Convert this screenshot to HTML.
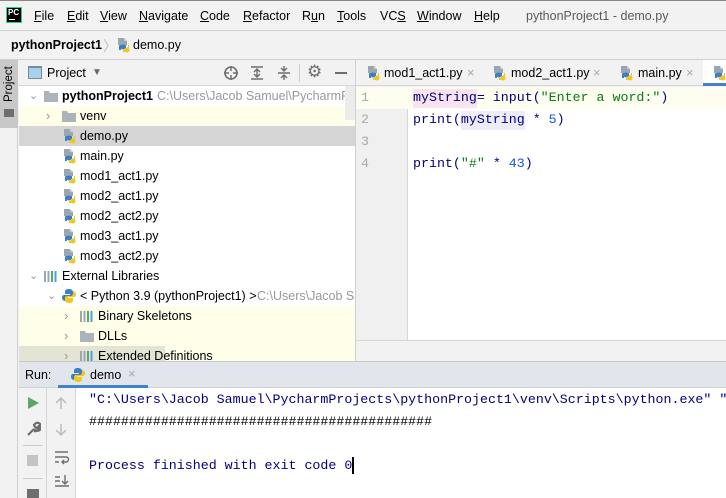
<!DOCTYPE html>
<html><head><meta charset="utf-8"><style>
*{margin:0;padding:0;box-sizing:border-box}
body{width:726px;height:498px;overflow:hidden;background:#f2f2f2;font-family:"Liberation Sans",sans-serif;font-size:12.5px;color:#000;position:relative}
.a{position:absolute;white-space:nowrap}
.mono{font-family:"Liberation Mono",monospace;font-size:13.3px}
.row{position:absolute;left:19px;width:336px;height:20px;line-height:20px}
u{text-decoration:underline}
.chv{color:#999;font-size:11px}
</style></head><body>
<svg width="0" height="0" style="position:absolute"><defs>
<symbol id="py" viewBox="0 0 16 16"><path d="M2 1h6l3 3v4H2z" fill="#9aa7b0"/><path d="M8 1v3h3" fill="#c6ccd1"/><path d="M6 8h4v3H5v2H3V9a1 1 0 0 1 1-1z" fill="#3d7fc4"/><path d="M12 8v4a1 1 0 0 1-1 1H7v2h4a2 2 0 0 0 2-2V8z" fill="#f5c518"/><circle cx="11" cy="13" r="2.5" fill="#f5c518"/><circle cx="7" cy="10" r="2.5" fill="#3d7fc4"/></symbol>
<symbol id="pyl" viewBox="0 0 16 16"><path d="M8 1C5 1 4 2 4 4v2h5v1H3C1 7 1 9 1 10s1 3 3 3V10c0-1 1-2 2-2h4c1 0 2-1 2-2V4c0-2-2-3-4-3z" fill="#3d7fc4"/><path d="M8 15c3 0 4-1 4-3v-2H7V9h6c2 0 2-2 2-3s-1-3-3-3v3c0 1-1 2-2 2H6c-1 0-2 1-2 2v2c0 2 2 3 4 3z" fill="#f5c518"/></symbol>
<symbol id="fold" viewBox="0 0 16 16"><path d="M1 3h5l1 2h8v9H1z" fill="#aab4ba"/></symbol>
<symbol id="lib" viewBox="0 0 16 16"><rect x="1" y="3" width="2" height="11" fill="#9aa7b0"/><rect x="4.5" y="3" width="2" height="11" fill="#9aa7b0"/><rect x="8" y="3" width="2" height="11" fill="#59a869"/><rect x="11.5" y="3" width="2" height="11" fill="#40a6e0"/></symbol>
</defs></svg>

<div class="a" style="left:0;top:0;width:726px;height:1px;background:#888"></div>
<div class="a" style="left:6px;top:7px;width:16px;height:16px;background:#000;border:1px solid #21d789"><span style="position:absolute;left:1px;top:1px;color:#fff;font-size:8px;font-weight:bold;line-height:8px">PC</span><span style="position:absolute;left:2px;bottom:2px;width:6px;height:1px;background:#fff"></span></div>
<div class="a" style="left:34px;top:9px;line-height:14px"><u>F</u>ile</div>
<div class="a" style="left:67px;top:9px;line-height:14px"><u>E</u>dit</div>
<div class="a" style="left:100px;top:9px;line-height:14px"><u>V</u>iew</div>
<div class="a" style="left:139px;top:9px;line-height:14px"><u>N</u>avigate</div>
<div class="a" style="left:200px;top:9px;line-height:14px"><u>C</u>ode</div>
<div class="a" style="left:243px;top:9px;line-height:14px"><u>R</u>efactor</div>
<div class="a" style="left:302px;top:9px;line-height:14px">R<u>u</u>n</div>
<div class="a" style="left:337px;top:9px;line-height:14px"><u>T</u>ools</div>
<div class="a" style="left:380px;top:9px;line-height:14px">VC<u>S</u></div>
<div class="a" style="left:417px;top:9px;line-height:14px"><u>W</u>indow</div>
<div class="a" style="left:474px;top:9px;line-height:14px"><u>H</u>elp</div>
<div class="a" style="left:526px;top:9px;line-height:14px;color:#5a5a5a">pythonProject1 - demo.py</div>
<div class="a" style="left:0;top:30px;width:726px;height:1px;background:#d0d0d0"></div>
<div class="a" style="left:11px;top:38px;line-height:14px;font-weight:bold">pythonProject1</div>
<div class="a" style="left:103px;top:36px;color:#bbb;font-size:14px">〉</div>
<svg class="a" style="left:116px;top:37px" width="16" height="16"><use href="#py"/></svg>
<div class="a" style="left:133px;top:38px;line-height:14px">demo.py</div>
<div class="a" style="left:0;top:59px;width:726px;height:1px;background:#d0d0d0"></div>

<div class="a" style="left:0;top:60px;width:18px;height:438px;background:#f2f2f2;border-right:1px solid #d0d0d0"></div>
<div class="a" style="left:0;top:60px;width:18px;height:68px;background:#c8c8c8"></div>
<div class="a" style="left:2px;top:102px;transform:rotate(-90deg);transform-origin:left top;font-size:11.5px;line-height:14px">Project</div>
<div class="a" style="left:4px;top:109px;width:10px;height:8px;background:#6e6e6e"></div>

<div class="a" style="left:19px;top:60px;width:336px;height:26px;background:#f2f2f2;border-bottom:1px solid #d6d6d6"></div>
<div class="a" style="left:28px;top:66px;width:14px;height:13px;border:1px solid #7a8a99;background:#a8d1ef;border-top-width:2px"></div>
<div class="a" style="left:47px;top:66px;line-height:14px">Project</div>
<div class="a" style="left:92px;top:66px;color:#666;font-size:10px;line-height:14px">▼</div>
<svg class="a" style="left:223px;top:65px" width="16" height="16"><circle cx="8" cy="8" r="6" fill="none" stroke="#6e6e6e" stroke-width="1.6"/><path d="M8 1v14M1 8h14" stroke="#6e6e6e" stroke-width="1.4"/><circle cx="8" cy="8" r="2" fill="#f2f2f2"/></svg>
<svg class="a" style="left:249px;top:65px" width="16" height="16"><path d="M2 2h12M2 14h12M8 4v8M5 7l3-3 3 3M5 9l3 3 3-3" stroke="#6e6e6e" stroke-width="1.4" fill="none"/></svg>
<svg class="a" style="left:276px;top:65px" width="16" height="16"><path d="M2 8h12M8 1v5M5 3l3 3 3-3M8 15v-5M5 13l3-3 3 3" stroke="#6e6e6e" stroke-width="1.4" fill="none"/></svg>
<div class="a" style="left:299px;top:64px;width:1px;height:18px;background:#ccc"></div>
<div class="a" style="left:307px;top:62px;font-size:17px;color:#6e6e6e">⚙</div>
<div class="a" style="left:335px;top:72px;width:12px;height:2px;background:#6e6e6e"></div>

<div class="a" style="left:19px;top:86px;width:336px;height:276px;background:#fff"></div>
<div class="row" style="top:86px"><span class="a chv" style="left:10px">⌄</span><svg class="a" style="left:24px;top:2px" width="16" height="16"><use href="#fold"/></svg><span class="a" style="left:43px;font-weight:bold">pythonProject1</span><span class="a" style="left:138px;color:#999">C:\Users\Jacob Samuel\PycharmPro</span></div>
<div class="row" style="top:106px;background:#fefee9"><span class="a chv" style="left:27px;font-size:13px">›</span><svg class="a" style="left:42px;top:2px" width="16" height="16"><use href="#fold"/></svg><span class="a" style="left:61px">venv</span></div>
<div class="row" style="top:126px;background:#d5d5d5"><svg class="a" style="left:43px;top:2px" width="16" height="16"><use href="#py"/></svg><span class="a" style="left:61px">demo.py</span></div>
<div class="row" style="top:146px"><svg class="a" style="left:43px;top:2px" width="16" height="16"><use href="#py"/></svg><span class="a" style="left:61px">main.py</span></div>
<div class="row" style="top:166px"><svg class="a" style="left:43px;top:2px" width="16" height="16"><use href="#py"/></svg><span class="a" style="left:61px">mod1_act1.py</span></div>
<div class="row" style="top:186px"><svg class="a" style="left:43px;top:2px" width="16" height="16"><use href="#py"/></svg><span class="a" style="left:61px">mod2_act1.py</span></div>
<div class="row" style="top:206px"><svg class="a" style="left:43px;top:2px" width="16" height="16"><use href="#py"/></svg><span class="a" style="left:61px">mod2_act2.py</span></div>
<div class="row" style="top:226px"><svg class="a" style="left:43px;top:2px" width="16" height="16"><use href="#py"/></svg><span class="a" style="left:61px">mod3_act1.py</span></div>
<div class="row" style="top:246px"><svg class="a" style="left:43px;top:2px" width="16" height="16"><use href="#py"/></svg><span class="a" style="left:61px">mod3_act2.py</span></div>
<div class="row" style="top:266px"><span class="a chv" style="left:10px">⌄</span><svg class="a" style="left:24px;top:2px" width="16" height="16"><use href="#lib"/></svg><span class="a" style="left:43px">External Libraries</span></div>
<div class="row" style="top:286px"><span class="a chv" style="left:28px">⌄</span><svg class="a" style="left:42px;top:2px" width="16" height="16"><use href="#pyl"/></svg><span class="a" style="left:61px">&lt; Python 3.9 (pythonProject1) &gt;</span><span class="a" style="left:238px;color:#999">C:\Users\Jacob Sa</span></div>
<div class="row" style="top:306px;background:#fefee9"><span class="a chv" style="left:45px;font-size:13px">›</span><svg class="a" style="left:60px;top:2px" width="16" height="16"><use href="#lib"/></svg><span class="a" style="left:79px">Binary Skeletons</span></div>
<div class="row" style="top:326px;background:#fefee9"><span class="a chv" style="left:45px;font-size:13px">›</span><svg class="a" style="left:60px;top:2px" width="16" height="16"><use href="#fold"/></svg><span class="a" style="left:79px">DLLs</span></div>
<div class="row" style="top:346px;height:16px;line-height:20px;overflow:hidden;background:#fefee9"><span class="a" style="left:0;width:146px;height:16px;background:#e4e4d4"></span><span class="a chv" style="left:45px;font-size:13px">›</span><svg class="a" style="left:60px;top:2px" width="16" height="16"><use href="#lib"/></svg><span class="a" style="left:79px">Extended Definitions</span></div>
<div class="a" style="left:345px;top:86px;width:10px;height:34px;background:#ececec"></div>
<div class="a" style="left:355px;top:60px;width:1px;height:302px;background:#d0d0d0"></div>

<div class="a" style="left:356px;top:60px;width:370px;height:26px;background:#f2f2f2;border-bottom:1px solid #d6d6d6"></div>
<svg class="a" style="left:366px;top:65px" width="16" height="16"><use href="#py"/></svg><div class="a" style="left:384px;top:66px;line-height:14px">mod1_act1.py</div><div class="a" style="left:467px;top:65px;color:#aaa;font-size:13px">×</div>
<svg class="a" style="left:492px;top:65px" width="16" height="16"><use href="#py"/></svg><div class="a" style="left:511px;top:66px;line-height:14px">mod2_act1.py</div><div class="a" style="left:593px;top:65px;color:#aaa;font-size:13px">×</div>
<svg class="a" style="left:619px;top:65px" width="16" height="16"><use href="#py"/></svg><div class="a" style="left:638px;top:66px;line-height:14px">main.py</div><div class="a" style="left:686px;top:65px;color:#aaa;font-size:13px">×</div>
<div class="a" style="left:703px;top:60px;width:23px;height:26px;background:#fff;border-bottom:3px solid #4083c9"></div>
<svg class="a" style="left:712px;top:65px" width="16" height="16"><use href="#py"/></svg>

<div class="a" style="left:356px;top:87px;width:370px;height:253px;background:#fff"></div>
<div class="a" style="left:356px;top:87px;width:52px;height:253px;background:#f0f0f0;border-right:1px solid #d6d6d6"></div>
<div class="a" style="left:356px;top:87px;width:370px;height:22px;background:#fdfdf0"></div>
<div class="a" style="left:413px;top:89px;width:64px;height:19px;background:#f9e3ee"></div>
<div class="a" style="left:461px;top:111px;width:64px;height:19px;background:#ececfb"></div>
<div class="a mono" style="left:361px;top:91px;line-height:14px;color:#aaa">1</div>
<div class="a mono" style="left:361px;top:113px;line-height:14px;color:#aaa">2</div>
<div class="a mono" style="left:361px;top:135px;line-height:14px;color:#aaa">3</div>
<div class="a mono" style="left:361px;top:157px;line-height:14px;color:#aaa">4</div>
<div class="a mono" style="left:413px;top:91px;line-height:14px;color:#000080">myString= input(<span style="color:#067d17">"Enter a word:"</span>)</div>
<div class="a mono" style="left:413px;top:113px;line-height:14px;color:#000080">print(myString * <span style="color:#1750eb">5</span>)</div>
<div class="a mono" style="left:413px;top:157px;line-height:14px;color:#000080">print(<span style="color:#067d17">"#"</span> * <span style="color:#1750eb">43</span>)</div>
<div class="a" style="left:356px;top:340px;width:370px;height:1px;background:#d6d6d6"></div>
<div class="a" style="left:19px;top:361px;width:707px;height:1px;background:#c9c9c9"></div>

<div class="a" style="left:19px;top:362px;width:707px;height:26px;background:#e1e5ec;border-bottom:1px solid #d0d0d0"></div>
<div class="a" style="left:25px;top:368px;line-height:14px">Run:</div>
<svg class="a" style="left:70px;top:367px" width="16" height="16"><use href="#pyl"/></svg>
<div class="a" style="left:90px;top:368px;line-height:14px">demo</div>
<div class="a" style="left:128px;top:366px;color:#aaa;font-size:13px">×</div>
<div class="a" style="left:58px;top:385px;width:90px;height:3px;background:#4083c9"></div>
<div class="a" style="left:19px;top:388px;width:707px;height:110px;background:#fff"></div>
<div class="a" style="left:19px;top:388px;width:57px;height:110px;background:#f2f2f2;border-right:1px solid #d6d6d6"></div>
<div class="a" style="left:46px;top:388px;width:1px;height:110px;background:#d6d6d6"></div>
<svg class="a" style="left:26px;top:396px" width="14" height="14"><path d="M2 1l11 6-11 6z" fill="#59a869"/></svg>
<svg class="a" style="left:25px;top:421px" width="16" height="16"><path d="M3 14l6-6M9 8a4 4 0 1 0 2-6l-2 2 1 2 2 1 2-2a4 4 0 0 1-5 5" stroke="#6e6e6e" stroke-width="2.2" fill="none"/></svg>
<div class="a" style="left:23px;top:445px;width:20px;height:1px;background:#ccc"></div>
<div class="a" style="left:27px;top:455px;width:11px;height:11px;background:#c4c4c4"></div>
<div class="a" style="left:23px;top:478px;width:20px;height:1px;background:#ccc"></div>
<div class="a" style="left:27px;top:489px;width:12px;height:9px;background:#6e6e6e"></div>
<svg class="a" style="left:54px;top:396px" width="14" height="14"><path d="M7 13V2M2 7l5-5 5 5" stroke="#bbb" stroke-width="1.5" fill="none"/></svg>
<svg class="a" style="left:54px;top:423px" width="14" height="14"><path d="M7 1v11M2 7l5 5 5-5" stroke="#bbb" stroke-width="1.5" fill="none"/></svg>
<svg class="a" style="left:54px;top:449px" width="16" height="16"><path d="M1 3h13M1 8h11a2.5 2.5 0 0 1 0 5H8M10 11l-2 2 2 2M1 13h4" stroke="#6e6e6e" stroke-width="1.4" fill="none"/></svg>
<svg class="a" style="left:54px;top:473px" width="16" height="16"><path d="M1 4h5M1 8h5M1 13h14M11 2v9M8 8l3 3 3-3" stroke="#6e6e6e" stroke-width="1.4" fill="none"/></svg>
<div class="a mono" style="left:89px;top:393px;line-height:14px;color:#000080">"C:\Users\Jacob Samuel\PycharmProjects\pythonProject1\venv\Scripts\python.exe" "</div>
<div class="a mono" style="left:89px;top:415px;line-height:14px;color:#000">###########################################</div>
<div class="a mono" style="left:89px;top:459px;line-height:14px;color:#000080">Process finished with exit code 0</div>
<div class="a" style="left:352px;top:457px;width:2px;height:17px;background:#000"></div>
</body></html>
